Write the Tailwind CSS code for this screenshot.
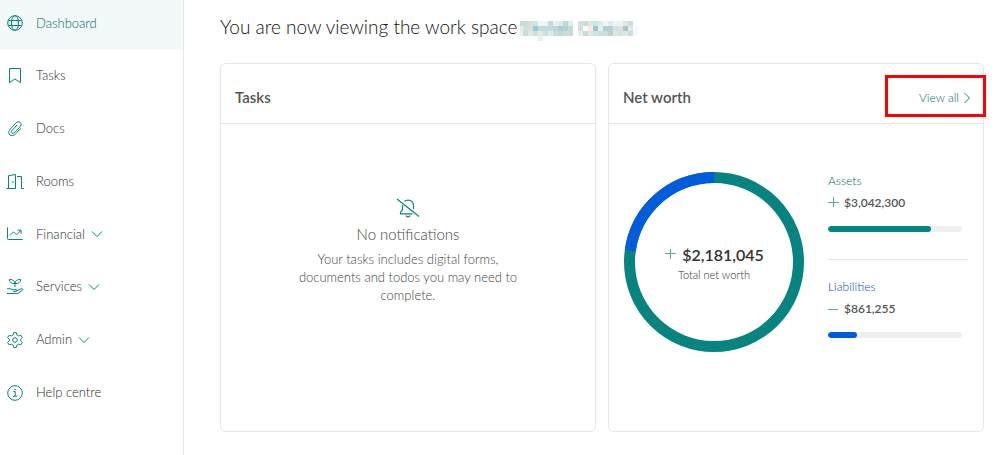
<!DOCTYPE html>
<html lang="en">

<head>
    <meta charset="UTF-8">
    <meta name="viewport" content="width=device-width, initial-scale=1.0">
    <title>Dashboard</title>
    <script src="https://cdn.jsdelivr.net/npm/@tailwindcss/browser@4"></script>
</head>

<body class="flex min-h-screen overflow-hidden bg-white font-['Lato',sans-serif] font-light text-[#2c2c2c]">
    <!-- Sidebar -->
    <aside class="w-46 shrink-0 border-r border-[#e6e6e6]">
        <nav class="-mt-[3px] grid h-[422px] grid-rows-8 text-[13px]">
            <a href="#" class="flex items-center gap-3 bg-[#f3f9f8] pl-1.5 text-[#006b67]" aria-current="page">
                <svg class="size-[18px]" viewBox="0 0 18 18" fill="none" stroke="#07847f">
                    <circle cx="9" cy="9" r="7.3" />
                    <ellipse cx="9" cy="9" rx="3.6" ry="7.3" />
                    <path d="M2.5 6.5h13M2.5 11.5h13" />
                </svg>
                Dashboard
            </a>
            <a href="#" class="flex items-center gap-3 pl-1.5">
                <svg class="size-[18px]" viewBox="0 0 18 18" fill="none" stroke="#07847f" stroke-linejoin="round">
                    <path d="M3.5 1.5h11v14.2L9 12l-5.5 3.7z" />
                </svg>
                Tasks
            </a>
            <a href="#" class="flex items-center gap-3 pl-1.5">
                <svg class="size-[18px]" viewBox="0 0 18 18" fill="none" stroke="#07847f" stroke-linecap="round">
                    <path d="M14.6 8.6l-5 5.3c-1.7 1.8-4.3 2.3-5.8 1s-1.3-3.9.4-5.7l5.6-6c1.3-1.4 3.3-1.8 4.5-.7s1 3-.3 4.4l-5.2 5.5c-.9.9-2.1 1.2-2.8.5s-.5-1.8.3-2.7l4.6-4.9" />
                </svg>
                Docs
            </a>
            <a href="#" class="flex items-center gap-3 pl-1.5">
                <svg class="size-[18px]" viewBox="0 0 18 18" fill="none" stroke="#07847f">
                    <path d="M.5 15.5h9V1.5L2.5 2.7v12.8M11 3.5h4.5v12H18" />
                    <circle cx="7" cy="9" r=".4" />
                </svg>
                Rooms
            </a>
            <a href="#" class="flex items-center gap-3 pl-1.5">
                <svg class="size-[18px]" viewBox="0 0 18 18" fill="none" stroke="#07847f" stroke-linejoin="round">
                    <path d="M1.5 2.5v11c0 .7.3 1 1 1h14.2M4 10.5l3.5-3.7 3 3L15 5.3M11.5 5.2h3.6v3.6" />
                </svg>
                <span class="flex items-center gap-1.5">Financial
                    <svg class="h-3 w-3" viewBox="0 0 12 12" fill="none" stroke="#07847f">
                        <path d="M1 3.5l5 5 5-5" />
                    </svg>
                </span>
            </a>
            <a href="#" class="flex items-center gap-3 pl-1.5">
                <svg class="size-[18px]" viewBox="0 0 18 18" fill="none" stroke="#07847f" stroke-linejoin="round">
                    <path d="M9 9V5M9 5.5C5.5 5.8 3.5 4.3 3.3 1.5 6.5 1.2 8.8 2.5 9 5.5zM9 5.5c3.5.3 5.5-1.2 5.7-4C11.5 1.2 9.2 2.5 9 5.5zM1 10.8h3.5l2.5.9h3c1.5 0 1.5 1.7 0 1.7H7M10.8 12.8l4.4-2c1.5-.5 2.3.8 1 1.7l-4.5 3H1" />
                </svg>
                <span class="flex items-center gap-1.5">Services
                    <svg class="h-3 w-3" viewBox="0 0 12 12" fill="none" stroke="#07847f">
                        <path d="M1 3.5l5 5 5-5" />
                    </svg>
                </span>
            </a>
            <a href="#" class="flex items-center gap-3 pl-1.5">
                <svg class="size-[18px]" viewBox="0 0 18 18" fill="none" stroke="#07847f" stroke-linejoin="round">
                    <path d="M7.7 1.7h2.6l.6 2.3 1.7 1 2.3-.7 1.4 2.3L14.700 8.2v1.7l1.6 1.7-1.4 2.2-2.3-.6-1.7 1-.6 2.2H7.7l-.6-2.2-1.7-1-2.3.6-1.4-2.2 1.6-1.700V8.2L1.7 6.600l1.4-2.3 2.3.7 1.7-1z" />
                    <circle cx="9" cy="9" r="2.3" />
                </svg>
                <span class="flex items-center gap-1.5">Admin
                    <svg class="h-3 w-3" viewBox="0 0 12 12" fill="none" stroke="#07847f">
                        <path d="M1 3.5l5 5 5-5" />
                    </svg>
                </span>
            </a>
            <a href="#" class="flex items-center gap-3 pl-1.5">
                <svg class="size-[18px]" viewBox="0 0 18 18" fill="none" stroke="#07847f">
                    <circle cx="9" cy="9" r="7.3" />
                    <path d="M7.5 7.5h1.7v4.5M7 12.3h4M8.3 5.5h1.4" />
                </svg>
                Help centre
            </a>
        </nav>
    </aside>

    <main class="min-w-0 flex-1 pr-4 pl-9">
        <div class="flex h-[63px] items-center gap-[3px] pb-2.5">
            <h1 class="text-[19px] leading-6 text-[#111]">You are now viewing the work space</h1>
            <!-- Obscured workspace name -->
            <svg class="mt-2 h-5 w-[118px]" viewBox="0 0 118 20" shape-rendering="crispEdges">
                <g id="mosaic"></g>
            </svg>
        </div>

        <div class="grid grid-cols-2 gap-3">
            <!-- Tasks -->
            <section class="flex min-h-[369px] flex-col rounded-md border border-[#e6e6e6]">
                <header class="flex h-[60px] items-center border-b border-[#e6e6e6] px-3.5 pt-2">
                    <h2 class="text-[15px] font-semibold text-[#555]">Tasks</h2>
                </header>
                <div class="flex flex-1 flex-col items-center pt-18 text-center text-[#444]">
                    <svg class="size-6" viewBox="0 0 24 24" fill="none" stroke="#07847f" stroke-width="1.2">
                        <path d="M1 3l22 17.5" />
                        <path d="M8.5 5.5c1-.9 2-1.4 3.5-1.4 3.5 0 5.5 2.5 5.5 5.5v3.4M6.5 9v4.5l-2 3v1.3h12M10 19.5c.5 1.7 3.5 1.7 4 0" />
                    </svg>
                    <h3 class="text-[15px] leading-7">No notifications</h3>
                    <p class="mt-0.5 w-56 text-[13px] leading-[18px]">Your tasks includes digital forms, documents and todos you may need to complete.</p>
                </div>
            </section>

            <!-- Net worth -->
            <section class="flex flex-col rounded-md border border-[#e6e6e6]">
                <header class="relative flex h-[60px] items-center justify-between border-b border-[#e6e6e6] px-3 pt-2">
                    <h2 class="pl-0.5 text-[15px] font-semibold text-[#555]">Net worth</h2>
                    <a href="#" class="flex items-center gap-1 text-xs text-[#006b67]">View all
                        <svg class="h-3 w-2" viewBox="0 0 8 12" fill="none" stroke="#07847f">
                            <path d="M1.5 1l5 5-5 5" />
                        </svg>
                    </a>
                    <div class="pointer-events-none absolute top-[11px] -right-[3px] h-[42px] w-[101px] border-3 border-[#ff0000]"></div>
                </header>
                <div class="flex px-[15px] pt-12">
                    <div class="grid size-[180px] shrink-0 place-items-center">
                        <svg class="col-start-1 row-start-1 size-[180px]" viewBox="0 0 180 180" fill="none" stroke-width="11">
                            <circle cx="90" cy="90" r="84.5" stroke="#07847f" />
                            <path d="M6.26 78.68A84.5 84.5 0 0 1 90 5.5" stroke="#005cdb" />
                        </svg>
                        <div class="col-start-1 row-start-1 pt-1.5 text-center">
                            <p class="flex items-center gap-1.5 text-base leading-5 font-semibold text-[#333]">
                                <svg class="size-3" viewBox="0 0 12 12" stroke="#5aa9a5">
                                    <path d="M6.5 0v10M1 4.5h11" />
                                </svg>
                                $2,181,045
                            </p>
                            <p class="text-[11px] leading-5">Total net worth</p>
                        </div>
                    </div>
                    <div class="ml-6 flex-1 text-xs">
                        <div class="pb-[27px]">
                            <h3 class="leading-[18px] text-[#006b67]">Assets</h3>
                            <p class="mt-[3px] flex items-center gap-1 leading-5 font-semibold text-[#555]">
                                <svg class="size-3" viewBox="0 0 12 12" stroke="#5aa9a5">
                                    <path d="M5.5 0v10M0 5.5h11" />
                                </svg>
                                $3,042,300
                            </p>
                            <div class="mt-[13px] mr-1.5 h-1.5 overflow-hidden rounded-full bg-[#efefef]">
                                <div class="h-full rounded-full bg-[#07847f]" style="width: 77%"></div>
                            </div>
                        </div>
                        <div class="border-t border-[#e6e6e6] pt-[18px]">
                            <h3 class="leading-[18px] text-[#0047c8]">Liabilities</h3>
                            <p class="mt-[3px] flex items-center gap-1 leading-5 font-semibold text-[#555]">
                                <svg class="size-3" viewBox="0 0 12 12" stroke="#5b9be8">
                                    <path d="M0 6.5h10" />
                                </svg>
                                $861,255
                            </p>
                            <div class="mt-[13px] mr-1.5 h-1.5 overflow-hidden rounded-full bg-[#efefef]">
                                <div class="h-full rounded-full bg-[#005cdb]" style="width: 22%"></div>
                            </div>
                        </div>
                    </div>
                </div>
            </section>
        </div>
    </main>

    <script>
        // 5px cells, one string per row; the first column is cut to 3px
        const rows = [
            'c9dcd9 c9dcd9 dcdcd6 c9e9ee eef5f5 eef5f5 c6dcdb e6f2f2 dfeceb c0d9d8 dfeeee ffffff d6e0dc c9dcd9 dfe5e0 c3e8ef dcecee eff5f5 dfeceb eef3f2 eef3f2 dbe8e6 cbdedd ffffff',
            'e8eae4 cfe0dd d6dfda 9ac9cf c3dadb c6dcdb c6dada bfd7d7 a9cfd0 b3d2d2 c6dada ffffff cfe0dd ffffff fbe9e2 9ac9cf e6efee b3cfd0 b3d2d4 d3e3e3 d8e4dc afc3ca e0ebea f4fafd',
            'f2efea cbdedd e3e8e5 cfe0e0 e8e8e0 c0e4ea dceaea c9dcdc c0d9d8 cbdedd cbdcd8 ffffff e6efec c9dcd9 dfe5e0 c9e4e8 cbdedd c9dcdc b9d3d3 dce5e0 d6e3dd d9e8e8 cbdedd f4fafd',
            'ffffff ffffff ffffff ffffff ecefec'
        ];
        const mosaic = document.getElementById('mosaic');
        rows.forEach((row, y) => {
            row.split(' ').forEach((color, x) => {
                const rect = document.createElementNS('http://www.w3.org/2000/svg', 'rect');
                rect.setAttribute('x', x === 0 ? 0 : x * 5 - 2);
                rect.setAttribute('y', y * 5);
                rect.setAttribute('width', x === 0 ? 3 : 5);
                rect.setAttribute('height', 5);
                rect.setAttribute('fill', '#' + color);
                mosaic.appendChild(rect);
            });
        });
    </script>
</body>

</html>
